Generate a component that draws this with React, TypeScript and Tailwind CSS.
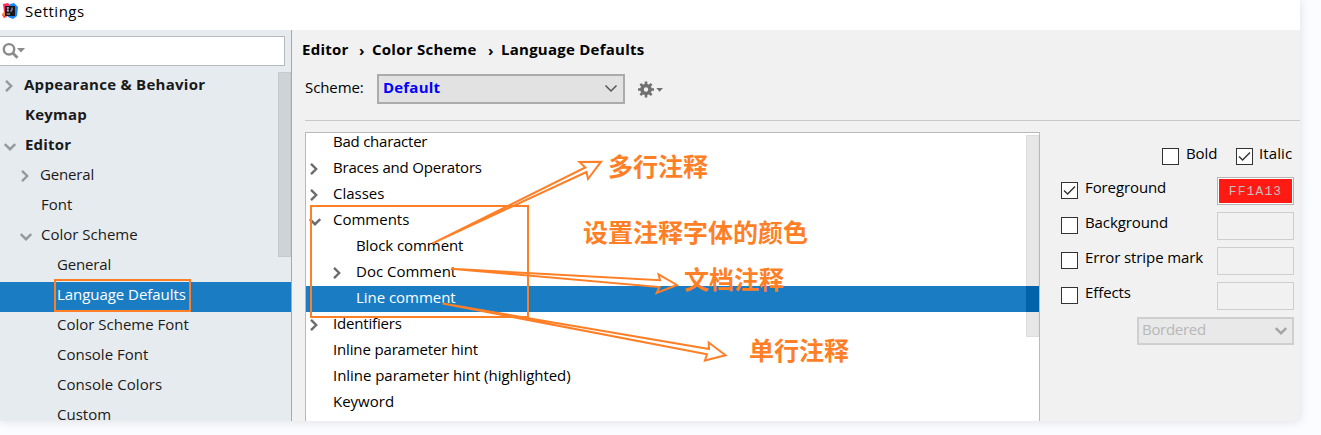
import React from "react";

const UI = "[font-family:'Open_Sans','Noto_Sans_CJK_SC',sans-serif]";

function Chevron({ open, className }: { open?: boolean; className?: string }) {
  return open ? (
    <svg width="12" height="8" viewBox="0 0 12 8" fill="none" className={className}>
      <path d="M.8 1 6 6.2 11.2 1" stroke="currentColor" strokeWidth="2.4" />
    </svg>
  ) : (
    <svg width="8" height="12" viewBox="0 0 8 12" fill="none" className={className}>
      <path d="M1 .8 6.2 6 1 11.2" stroke="currentColor" strokeWidth="2.4" />
    </svg>
  );
}

type Row = { label: string; text: string; arrow?: string; open?: boolean; selected?: boolean };

const tree: Row[] = [
  { label: "Appearance & Behavior", text: "pl-6 font-bold tracking-[0.27px]", arrow: "left-[5px]" },
  { label: "Keymap", text: "pl-[25px] font-bold tracking-[0.2px]" },
  { label: "Editor", text: "pl-[25px] font-bold tracking-[0.2px]", arrow: "left-1", open: true },
  { label: "General", text: "pl-10 tracking-[-0.15px]", arrow: "left-[21px]" },
  { label: "Font", text: "pl-[41px]" },
  { label: "Color Scheme", text: "pl-[41px]", arrow: "left-5", open: true },
  { label: "General", text: "pl-[57px] tracking-[-0.15px]" },
  { label: "Language Defaults", text: "pl-[57px] tracking-[-0.05px]", selected: true },
  { label: "Color Scheme Font", text: "pl-[57px]" },
  { label: "Console Font", text: "pl-[57px]" },
  { label: "Console Colors", text: "pl-[57px] tracking-[0.04px]" },
  { label: "Custom", text: "pl-[57px]" },
];

const attributes: Row[] = [
  { label: "Bad character", text: "pl-[27px] tracking-[-0.24px]" },
  { label: "Braces and Operators", text: "pl-[27px] tracking-[-0.2px]", arrow: "left-1" },
  { label: "Classes", text: "pl-[27px]", arrow: "left-1" },
  { label: "Comments", text: "pl-[27px]", arrow: "left-[3px]", open: true },
  { label: "Block comment", text: "pl-[50px] tracking-[-0.08px]" },
  { label: "Doc Comment", text: "pl-[50px]", arrow: "left-[27px]" },
  { label: "Line comment", text: "pl-[50px] tracking-[-0.04px]", selected: true },
  { label: "Identifiers", text: "pl-[27px] tracking-[-0.18px]", arrow: "left-1" },
  { label: "Inline parameter hint", text: "pl-[27px] tracking-[-0.15px]" },
  { label: "Inline parameter hint (highlighted)", text: "pl-[27px] tracking-[-0.04px]" },
  { label: "Keyword", text: "pl-[27px]" },
];

function Check({ on }: { on?: boolean }) {
  return (
    <span className="flex size-[17px] shrink-0 items-center justify-center border border-[#333] bg-white">
      {on && (
        <svg width="13" height="11" viewBox="0 0 13 11" fill="none">
          <path d="M1 5.5 4.6 9 12 1.4" stroke="#333" strokeWidth="1.4" />
        </svg>
      )}
    </span>
  );
}

const options = [
  { label: "Foreground", on: true, value: "FF1A13" },
  { label: "Background" },
  { label: "Error stripe mark" },
  { label: "Effects" },
];

function TitleBar() {
  return (
    <header className="flex h-[30px] items-start bg-white">
      <svg width="16" height="16" viewBox="0 0 16 16" className="ml-[2px] mt-[3px]">
        <path d="M1 1 6 0 9 3 5 14 2 15 0 12 2 9Z" fill="#f8325f" />
        <path d="M0 11 4 8 5 14 2 13Z" fill="#fa8b2a" />
        <path d="M8 1 12 0 16 4 15 13 11 16 6 14Z" fill="#1688f5" />
        <path d="M3 3H13V13H3Z" fill="#1a1420" />
        <path d="M4.8 4.8H7M5.9 4.8V8M4.8 8H7M10 4.5V7.5L9.3 8H8.2M4.8 11H8" stroke="#d8d8d8" fill="none" strokeWidth=".9" />
      </svg>
      <span className="ml-[7px] text-[15px] leading-[23px] tracking-[0.5px]">Settings</span>
    </header>
  );
}

function Sidebar() {
  return (
    <aside className="flex w-[292px] shrink-0 flex-col border-r border-[#a5aaae] bg-[#e6ebef]">
      <div className="mt-[6px] flex h-[30px] w-[285px] items-start border border-l-0 border-[#b5b9bc] bg-white">
        <svg width="24" height="18" viewBox="0 0 24 18" fill="none" className="ml-[2px] mt-[5px]">
          <circle cx="7" cy="7.3" r="5.2" stroke="#8b8b8b" strokeWidth="2.4" />
          <path d="M10.7 11 15.5 15.8" stroke="#8b8b8b" strokeWidth="2.8" />
          <path d="M15 6H23L19 10.5Z" fill="#8b8b8b" />
        </svg>
      </div>
      <div className="relative mt-[6px] flex-1 overflow-hidden">
        {tree.map((r, i) => (
          <div key={i} className={`relative h-[30px] ${r.selected ? "bg-[#1a7dc4] text-white" : "text-[#1a1a1a]"}`}>
            {r.arrow && <Chevron open={r.open} className={`absolute ${r.open ? "top-[11px]" : "top-2"} text-[#96999c] ${r.arrow}`} />}
            <div className={`whitespace-nowrap text-[15px] leading-6 ${r.text}`}>{r.label}</div>
          </div>
        ))}
        <div className="absolute right-0 top-0 h-[185px] w-[13px] border border-[#c5cacd] bg-[#ced3d7]" />
      </div>
    </aside>
  );
}

function AttributeList() {
  return (
    <div className="relative w-[735px] shrink-0 overflow-hidden border border-b-0 border-[#b9b9b9] bg-white">
      <div className="-mt-[3px]">
        {attributes.map((r, i) => (
          <div key={i} className={`relative h-[26px] ${r.selected ? "bg-[#1a7dc4] text-white" : "text-black"}`}>
            {r.arrow && <Chevron open={r.open} className={`absolute ${r.open ? "top-[10px]" : "top-[7px]"} text-[#6c6c6c] ${r.arrow}`} />}
            <div className={`whitespace-nowrap text-[15px] leading-[22px] ${r.text}`}>{r.label}</div>
          </div>
        ))}
      </div>
      <div className="absolute right-0 top-[2px] h-[202px] w-[13px] border border-[#dedede] bg-[#e7e7e7]" />
      <div className="absolute right-0 top-[153px] h-[26px] w-[13px] bg-[#0263ab]" />
    </div>
  );
}

function StylePanel() {
  return (
    <div className="flex flex-1 flex-col pl-[21px] pr-[6px]">
      <div className="mt-[10px] flex h-[35px] items-start justify-end">
        <div className="mt-[6px]"><Check /></div>
        <span className="ml-[7px] w-[31px] whitespace-nowrap text-[15px] leading-[22px] tracking-[-0.1px]">Bold</span>
        <div className="ml-[19px] mt-[6px]"><Check on /></div>
        <span className="ml-[6px] w-[35px] whitespace-nowrap text-[15px] leading-[22px] tracking-[0.1px]">Italic</span>
      </div>
      {options.map((o) => (
        <div key={o.label} className="flex h-[35px] items-start">
          <div className="mt-[5px]"><Check on={o.on} /></div>
          <span className="ml-[7px] flex-1 whitespace-nowrap text-[15px] leading-5 tracking-[-0.1px]">{o.label}</span>
          <div className={`h-7 w-[77px] border p-px ${o.value ? "border-[#b5b5b5] bg-white" : "border-[#cecece]"}`}>
            {o.value && (
              <div className="flex h-full items-center justify-center bg-[#ff1a13] pt-[2px] text-[13px] tracking-[1.1px] text-[#c8c0c0] [font-family:'Liberation_Mono',monospace]">
                {o.value}
              </div>
            )}
          </div>
        </div>
      ))}
      <div className="flex h-7 w-[157px] items-start justify-between self-end border-2 border-[#cfcfcf] bg-[#e9e9e9] pl-[3px] pr-[5px] text-[#b8b8b8]">
        <span className="text-[15px] leading-[21px] tracking-[-0.3px]">Bordered</span>
        <Chevron open className="mt-2 text-[#a5a5a5]" />
      </div>
    </div>
  );
}

function Note({ className, children }: { className: string; children: React.ReactNode }) {
  return (
    <span className={`absolute whitespace-nowrap text-[25px] font-bold leading-[30px] text-[#ff7f27] [font-family:'Noto_Sans_CJK_SC',sans-serif] ${className}`}>
      {children}
    </span>
  );
}

function Annotations() {
  return (
    <div className="pointer-events-none absolute inset-0">
      <div className="absolute left-[54px] top-[279px] h-[33px] w-[137px] border-2 border-[#ff7f27]" />
      <div className="absolute left-[310px] top-[205px] h-[113px] w-[219px] border-2 border-[#ff7f27]" />
      <svg width="1300" height="421" className="absolute left-0 top-0" fill="none" stroke="#ff7f27" strokeWidth="2" strokeLinejoin="miter">
        <path d="M432.5 243.3 585.3 167.5 579.5 162 601 161.7 588 179 586.5 172Z" />
        <path d="M451 268.8 660 280.2 658.5 274.3 677 285 656.7 293 659.5 287Z" />
        <path d="M442.7 303.6 709 349 708.7 342.5 725.5 355.3 704.9 360.5 707 354.3Z" />
      </svg>
      <Note className="left-[608px] top-[150px]">多行注释</Note>
      <Note className="left-[583px] top-[216px]">设置注释字体的颜色</Note>
      <Note className="left-[684px] top-[263px]">文档注释</Note>
      <Note className="left-[749px] top-[334px]">单行注释</Note>
    </div>
  );
}

export default function App() {
  return (
    <div className={`h-[435px] w-[1321px] overflow-hidden bg-[#fbfcff] text-black ${UI}`}>
      <div className="relative flex h-[421px] w-[1300px] flex-col overflow-hidden shadow-[0_0_10px_rgba(0,0,0,0.12)]">
        <TitleBar />
        <div className="flex min-h-0 flex-1">
          <Sidebar />
          <main className="flex min-w-0 flex-1 flex-col bg-[#f1f1f1] pl-[13px]">
            <nav className="-ml-[3px] flex h-11 items-start pt-[7px] text-[15px] font-bold leading-6 tracking-[0.25px]">
              <span className="w-[57px] whitespace-nowrap">Editor</span>
              <span className="w-[13px] pt-px">›</span>
              <span className="w-[116px] whitespace-nowrap">Color Scheme</span>
              <span className="w-[13px] pt-px">›</span>
              <span className="whitespace-nowrap">Language Defaults</span>
            </nav>
            <div className="flex h-[46px] items-start">
              <span className="w-[72px] text-[15px] leading-[26px] tracking-[-0.1px]">Scheme:</span>
              <div className="flex h-[30px] w-[248px] items-start justify-between border-2 border-[#ababab] bg-[#e2e2e2] pl-1 pr-[5px]">
                <span className="text-[15px] font-bold leading-[22px] tracking-[0.2px] text-[#0000ff]">Default</span>
                <svg width="14" height="9" viewBox="0 0 14 9" fill="none" className="mt-2">
                  <path d="M1.5 1.5 7 7 12.5 1.5" stroke="#555" strokeWidth="1.5" />
                </svg>
              </div>
              <svg width="26" height="18" viewBox="0 0 26 18" fill="none" className="ml-[13px] mt-[7px]">
                <circle cx="8" cy="8.5" r="4" stroke="#707070" strokeWidth="3.6" />
                <path d="M8 .5V3.5M8 13.5V16.5M0 8.5H3M13 8.5H16M2.4 2.9 4.5 5M11.5 12 13.6 14.1M13.6 2.9 11.5 5M4.5 12 2.4 14.1" stroke="#707070" strokeWidth="2.6" />
                <path d="M18.3 7H25L21.6 10.8Z" fill="#707070" />
              </svg>
            </div>
            <div className="h-px shrink-0 bg-[#c9c9c9]" />
            <div className="mt-[11px] flex min-h-0 flex-1">
              <AttributeList />
              <StylePanel />
            </div>
          </main>
        </div>
        <Annotations />
      </div>
    </div>
  );
}
